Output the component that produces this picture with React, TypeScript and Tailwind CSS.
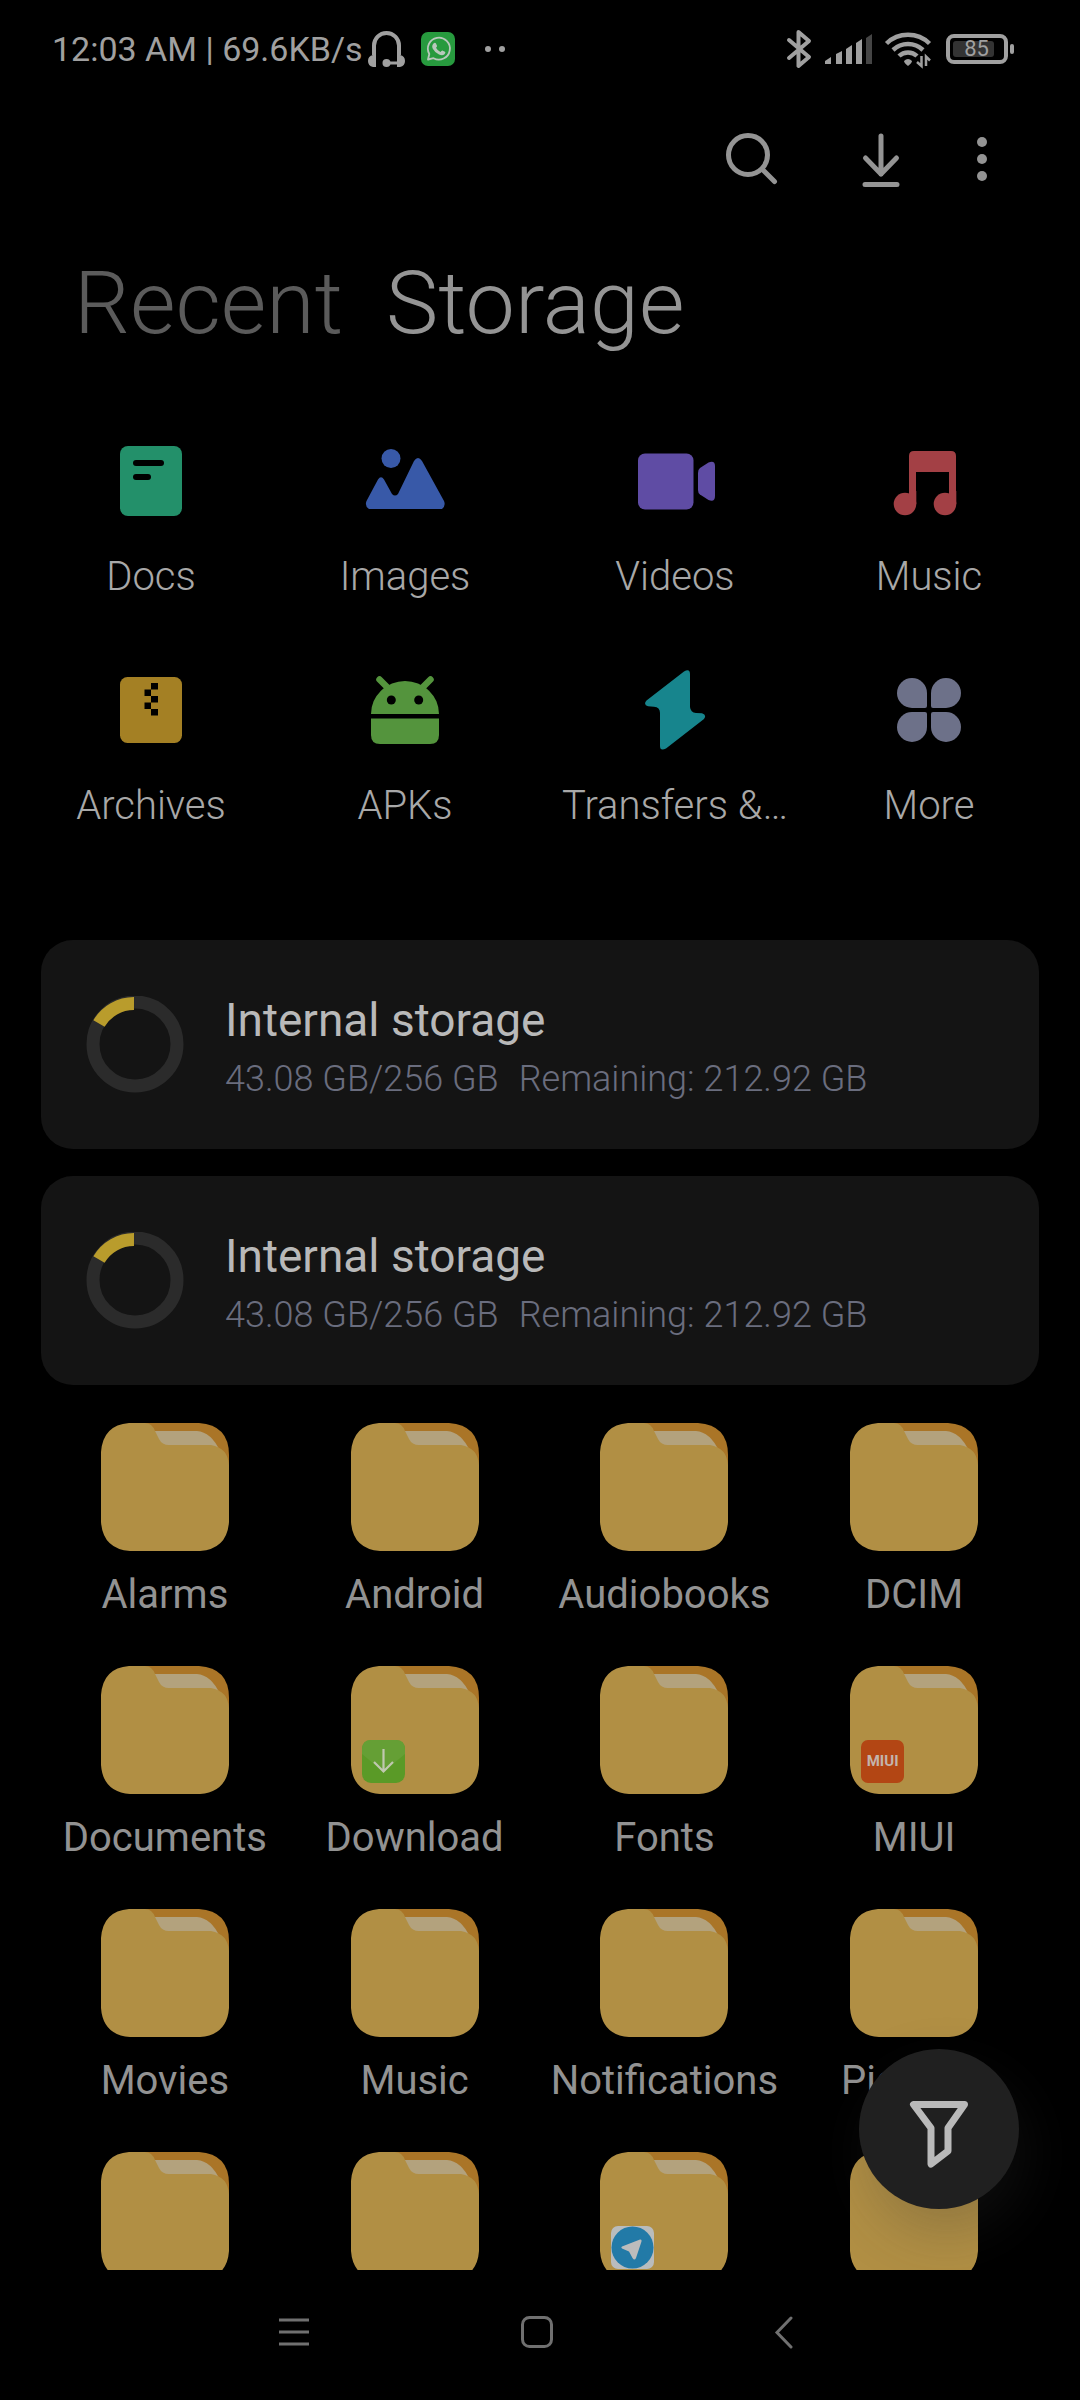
import React from "react";

type Category = {
    name: string;
    icon: React.ReactNode;
};

type Folder = {
    name: string;
    badge?: React.ReactNode;
};

const categories: Category[] = [
    {
        name: "Docs",
        icon: (
            <>
                <rect x="9" y="5" width="62" height="70" rx="8" fill="#23906a" />
                <rect x="22" y="19" width="31" height="6" rx="3" fill="#000" />
                <rect x="22" y="33" width="18" height="6" rx="3" fill="#000" />
            </>
        ),
    },
    {
        name: "Images",
        icon: (
            <g fill="#3859a8">
                <circle cx="26" cy="17.5" r="9.5" />
                <path d="M1.5 60 L13 38.5 Q16 34 19 38.5 L27 53 Q30 56 33 53 L49 20 Q53 14 57 20 L79 60 Q81 65 77 68 H4 Q-.5 65 1.5 60Z" />
            </g>
        ),
    },
    {
        name: "Videos",
        icon: (
            <g fill="#5f4ca4">
                <rect x="3" y="12.5" width="55.5" height="56" rx="7" />
                <path d="M65 27 L73.5 21.5 Q80 19 80 25 V55 Q80 61.5 73.5 59 L65 53.5 Q63 52 63 49 V32 Q63 28.5 65 27Z" />
            </g>
        ),
    },
    {
        name: "Music",
        icon: (
            <g fill="#a34045">
                <path d="M20 54 V15 Q20 10 25 10 H62 Q67 10 67 15 V63 H60 V31 H27 V63 H20Z" />
                <circle cx="16" cy="63" r="11.3" />
                <circle cx="56" cy="63" r="11.3" />
                <rect x="20" y="50" width="7.3" height="13" />
                <rect x="60" y="50" width="7.3" height="13" />
            </g>
        ),
    },
    {
        name: "Archives",
        icon: (
            <>
                <rect x="9" y="7" width="62" height="66" rx="7.5" fill="#a48024" />
                <path d="M40 13h7v6.5h-7zM33.5 19.5h6.5v6.5h-6.5zM40 26h7v6.5h-7zM33.5 32.5h6.5v6.5h-6.5zM40 39h7v6.5h-7z" fill="#000" />
            </>
        ),
    },
    {
        name: "APKs",
        icon: (
            <>
                <path d="M14.5 9.5 L25 20 M65.5 9.5 L55 20" stroke="#54943d" strokeWidth="6.5" strokeLinecap="round" />
                <path d="M6 44 A34 33 0 0 1 74 44Z" fill="#54943d" />
                <path d="M6 48.5 H74 V65 Q74 74 65 74 H15 Q6 74 6 65Z" fill="#54943d" />
                <circle cx="26.3" cy="30" r="4.5" fill="#000" />
                <circle cx="53.7" cy="30" r="4.5" fill="#000" />
            </>
        ),
    },
    {
        name: "Transfers &…",
        icon: (
            <path
                d="M49 1.5 Q55 -2 55 4 V37 Q55.5 42.5 61 43 L67 43.3 Q72 45 69 49 L31 78.5 Q25 81.5 25 76 V43 Q25 37 19 36.7 L13 36.3 Q8 34.5 11.5 30.5Z"
                fill="#17858d"
            />
        ),
    },
    {
        name: "More",
        icon: (
            <g fill="#6d7189">
                <path d="M23 8 A15 15 0 0 1 38 23 V36 Q38 38 36 38 H23 A15 15 0 0 1 23 8Z" />
                <path d="M57 8 A15 15 0 0 0 42 23 V36 Q42 38 44 38 H57 A15 15 0 0 0 57 8Z" />
                <path d="M23 72 A15 15 0 0 0 38 57 V44 Q38 42 36 42 H23 A15 15 0 0 0 23 72Z" />
                <path d="M57 72 A15 15 0 0 1 42 57 V44 Q42 42 44 42 H57 A15 15 0 0 1 57 72Z" />
            </g>
        ),
    },
];

const volumes = [
    { id: 1, name: "Internal storage", used: "43.08 GB/256 GB", remaining: "Remaining: 212.92 GB" },
    { id: 2, name: "Internal storage", used: "43.08 GB/256 GB", remaining: "Remaining: 212.92 GB" },
];

const DownloadBadge = () => (
    <svg viewBox="0 0 43 43" className="size-full">
        <rect width="43" height="43" rx="9" fill="#5a9a27" />
        <path d="M0 14 L21.5 32 L43 14 V9 Q43 0 34 0 H9 Q0 0 0 9Z" fill="#659f35" />
        <path d="M21.5 9 V31 M12 22 L21.5 31.5 L31 22" fill="none" stroke="#c0c8b0" strokeWidth="2.2" />
    </svg>
);

const TelegramBadge = () => (
    <svg viewBox="0 0 43 43" className="size-full">
        <rect width="43" height="43" rx="7" fill="#b9bcbd" />
        <circle cx="21.5" cy="21.5" r="21" fill="#227aa7" />
        <path d="M11 20.5 L29 13.5 Q31 13 30.5 15.5 L25 32 Q23.5 35 21.5 32 L18 25.5 L11 22.5 Q9.5 21.5 11 20.5Z" fill="#bcbcbc" />
    </svg>
);

const folders: Folder[] = [
    { name: "Alarms" },
    { name: "Android" },
    { name: "Audiobooks" },
    { name: "DCIM" },
    { name: "Documents" },
    { name: "Download", badge: <DownloadBadge /> },
    { name: "Fonts" },
    {
        name: "MIUI",
        badge: (
            <span className="flex size-full items-center justify-center rounded-[7px] bg-[#b34614] text-[15px] font-bold text-[#c4b4ac]">
                MIUI
            </span>
        ),
    },
    { name: "Movies" },
    { name: "Music" },
    { name: "Notifications" },
    { name: "Pictures" },
    { name: "" },
    { name: "" },
    { name: "", badge: <TelegramBadge /> },
    { name: "" },
];

const StatusBar = () => (
    <div className="flex h-[98px] shrink-0 items-center justify-between pr-[66px] pl-[52px] text-[#a0a0a0]">
        <div className="flex items-center">
            <span className="text-[34px] leading-10">12:03 AM | 69.6KB/s</span>
            <svg viewBox="0 0 38 38" className="ml-1 size-[38px]">
                <path d="M7 25 V15.5 A12.5 12.5 0 0 1 32 15.5 V25" fill="none" stroke="currentColor" strokeWidth="4" />
                <path d="M9 25 V37 H6 Q1 36 1 31 T6 25Z M30 25 V37 H33 Q38 36 38 31 T33 25Z" fill="currentColor" />
                <path d="M20 33 H32" stroke="currentColor" strokeWidth="3" />
                <circle cx="19.5" cy="33" r="4" fill="currentColor" />
            </svg>
            <svg viewBox="0 0 34 34" className="ml-4 size-[34px]">
                <rect width="34" height="34" rx="7" fill="#279a3e" />
                <path d="M7 27.5 L8.3 22 A11 11 0 1 1 12.5 26.2Z" fill="none" stroke="#b9c8bc" strokeWidth="1.8" strokeLinejoin="round" />
                <path d="M12.5 11.5 q1.5-1.5 2.5 0 l1 2.3 q.3.8-1 2 q1.5 3 4.5 4.2 q1-1.5 1.8-1.5 l2.7 1.3 q1 .7-.5 2.4 q-2 1.8-5.5.3 q-4-1.8-6.2-5.8 q-1.5-3 .7-5.2z" fill="#b9c8bc" />
            </svg>
            <svg viewBox="0 0 24 8" className="ml-7 h-2 w-6">
                <circle cx="5" cy="4" r="3" fill="currentColor" />
                <circle cx="19" cy="4" r="3" fill="currentColor" />
            </svg>
        </div>
        <div className="flex items-center">
            <svg viewBox="0 0 26 40" className="h-10 w-[26px]" fill="none" stroke="currentColor" strokeWidth="4" strokeLinejoin="round" strokeLinecap="round">
                <path d="M3 11 L23 28 L12.5 37 V3 L23 12 L3 29" />
            </svg>
            <svg viewBox="0 0 50 32" className="ml-3 h-8 w-[50px]" fill="currentColor">
                <path d="M1 31 V28 L7 24 V31Z M12 31 V21 L18 18 V31Z M22 31 V16 L28 12 V31Z M32 31 V10 L38 6 V31Z" />
                <path d="M42 31 V5 L48 1 V31Z" fill="#454545" />
            </svg>
            <svg viewBox="0 0 48 40" className="ml-2.5 h-10 w-12">
                <g fill="none" stroke="currentColor" strokeWidth="4.5">
                    <path d="M2.5 14.5 A31 31 0 0 1 45.5 14.5" />
                    <path d="M9 21 A22 22 0 0 1 39 21" />
                    <path d="M15 27 A13 13 0 0 1 33 27" />
                </g>
                <path d="M20 32 Q24 28 28 32 Q28 34 24 37 Q20 34 20 32Z" fill="currentColor" />
                <path d="M37.5 27 V37 L33 33 M42 37 V27.5 L46 31.5" fill="none" stroke="currentColor" strokeWidth="2.5" />
            </svg>
            <div className="ml-3.5 flex items-center gap-0.5">
                <div className="flex h-[30px] w-[62px] items-center rounded-lg border-4 border-current px-[3px]">
                    <div className="h-4 w-[41px] rounded-[3px] bg-[#333] pl-1.5 text-center text-[22px] leading-4">85</div>
                </div>
                <div className="h-2.5 w-1 rounded-full bg-current" />
            </div>
        </div>
    </div>
);

const AppBar = () => (
    <header className="flex h-[124px] items-center justify-end pr-20 text-[#949494]">
        <button aria-label="Search" className="mr-[73px]">
            <svg viewBox="0 0 56 56" className="size-14" fill="none" stroke="currentColor" strokeWidth="5" strokeLinecap="round">
                <circle cx="24" cy="23" r="19.5" />
                <path d="M38.5 37.5 L50.5 49.5" />
            </svg>
        </button>
        <button aria-label="Downloads" className="mr-[55px]">
            <svg viewBox="0 0 56 56" className="size-14" fill="none" stroke="currentColor" strokeWidth="5" strokeLinecap="round" strokeLinejoin="round">
                <path d="M28 4 V42 M12.5 26 L28 42 L43.5 26 M12 52.5 H44" />
            </svg>
        </button>
        <button aria-label="More options">
            <svg viewBox="0 0 36 56" className="h-14 w-9" fill="currentColor">
                <circle cx="18" cy="10" r="5" />
                <circle cx="18" cy="27" r="5" />
                <circle cx="18" cy="44" r="5" />
            </svg>
        </button>
    </header>
);

const FolderIcon = () => (
    <svg viewBox="0 0 128 128" className="size-32">
        <path d="M40 0 H98 Q128 2 128 32 V60 H40Z" fill="#aa7527" />
        <path d="M50 8 H96 Q110 9 119 28 H50Z" fill="#b3a27d" />
        <path
            d="M28 0 H44 Q51 0 54 8 L58 16 Q61 22 68 22 H110 Q127 25 128 42 V99 Q126 126 99 128 H29 Q2 126 0 99 V29 Q2 2 28 0Z"
            fill="#b18f44"
        />
    </svg>
);

const App = () => {
    return (
        <div className="relative flex h-screen flex-col overflow-hidden bg-black font-['Roboto',sans-serif]">
            <StatusBar />
            <main className="min-h-0 flex-1 overflow-hidden">
                <AppBar />
                <div role="tablist" className="mt-[29px] flex gap-[43px] px-[74px] text-[88px] leading-[104px] font-light">
                    <button role="tab" aria-selected="false" className="text-[#5b5b5b]">Recent</button>
                    <button role="tab" aria-selected="true" className="text-[#949494]">Storage</button>
                </div>

                <div className="mt-[86px] grid grid-cols-[238fr_270fr_270fr_238fr] gap-y-[70px] px-8">
                    {categories.map((category) => (
                        <button key={category.name} className="flex flex-col items-center gap-[33px]">
                            <svg viewBox="0 0 80 80" className="size-20">{category.icon}</svg>
                            <span className="text-[40px] leading-[46px] font-light whitespace-nowrap text-[#a8a8a8]">{category.name}</span>
                        </button>
                    ))}
                </div>

                <div className="mt-[111px] flex flex-col gap-[27px] px-[41px]">
                    {volumes.map((volume) => (
                        <button key={volume.id} className="flex h-[209px] items-center gap-[41px] rounded-[32px] bg-[#141414] pl-[45px] text-left">
                            <svg viewBox="0 0 98 98" className="size-[98px]" fill="none">
                                <circle cx="49" cy="48" r="42" stroke="#2b2b2b" strokeWidth="13" />
                                <path d="M13 27.5 A40.5 40.5 0 0 1 48 7.5" stroke="#b99c2c" strokeWidth="13" />
                            </svg>
                            <span className="flex flex-col pt-[10px]">
                                <span className="text-[46px] leading-[58px] text-[#b9b9b9]">{volume.name}</span>
                                <span className="flex gap-5 text-[36px] leading-[60px] font-light text-[#6a6d7e]">
                                    <span>{volume.used}</span>
                                    <span>{volume.remaining}</span>
                                </span>
                            </span>
                        </button>
                    ))}
                </div>

                <div className="mt-[38px] grid grid-cols-4 gap-y-12 pr-[41px] pl-10">
                    {folders.map((folder, index) => (
                        <button key={index} aria-label={folder.name || "Folder"} className="flex flex-col items-center gap-[21px]">
                            <span className="relative">
                                <FolderIcon />
                                {folder.badge && <span className="absolute top-[74px] left-[11px] size-[43px]">{folder.badge}</span>}
                            </span>
                            <span className="h-[46px] text-[40px] leading-[46px] text-[#929292]">{folder.name}</span>
                        </button>
                    ))}
                </div>
            </main>

            <button
                aria-label="Filter"
                className="absolute right-[61px] bottom-[191px] flex size-40 items-center justify-center rounded-full bg-[#202020] shadow-[8px_24px_56px_rgba(50,50,50,0.25)]"
            >
                <svg viewBox="0 0 60 80" className="h-20 w-[60px]" fill="none" stroke="#bababa" strokeWidth="7" strokeLinejoin="round">
                    <path d="M4.5 15.5 H55.5 L39 39 V62 L22 75 V39Z" />
                </svg>
            </button>

            <nav className="flex h-[130px] shrink-0 items-center justify-center pr-0.5 text-[#707070]">
                <button aria-label="Recent apps" className="flex w-[245px] justify-center">
                    <svg viewBox="0 0 32 34" className="h-[34px] w-8" fill="none" stroke="currentColor" strokeWidth="3">
                        <path d="M1 2 H31 M1 14 H31 M1 26 H31" />
                    </svg>
                </button>
                <button aria-label="Home" className="flex w-[245px] justify-center">
                    <svg viewBox="0 0 38 38" className="size-[38px]" fill="none" stroke="currentColor" strokeWidth="3">
                        <rect x="2.5" y="1.5" width="29" height="29" rx="7" />
                    </svg>
                </button>
                <button aria-label="Back" className="flex w-[245px] justify-center">
                    <svg viewBox="0 0 20 38" className="h-[38px] w-5" fill="none" stroke="currentColor" strokeWidth="3" strokeLinecap="round">
                        <path d="M17 2 L3 16.5 L17 31" />
                    </svg>
                </button>
            </nav>
        </div>
    );
};

export default App;
